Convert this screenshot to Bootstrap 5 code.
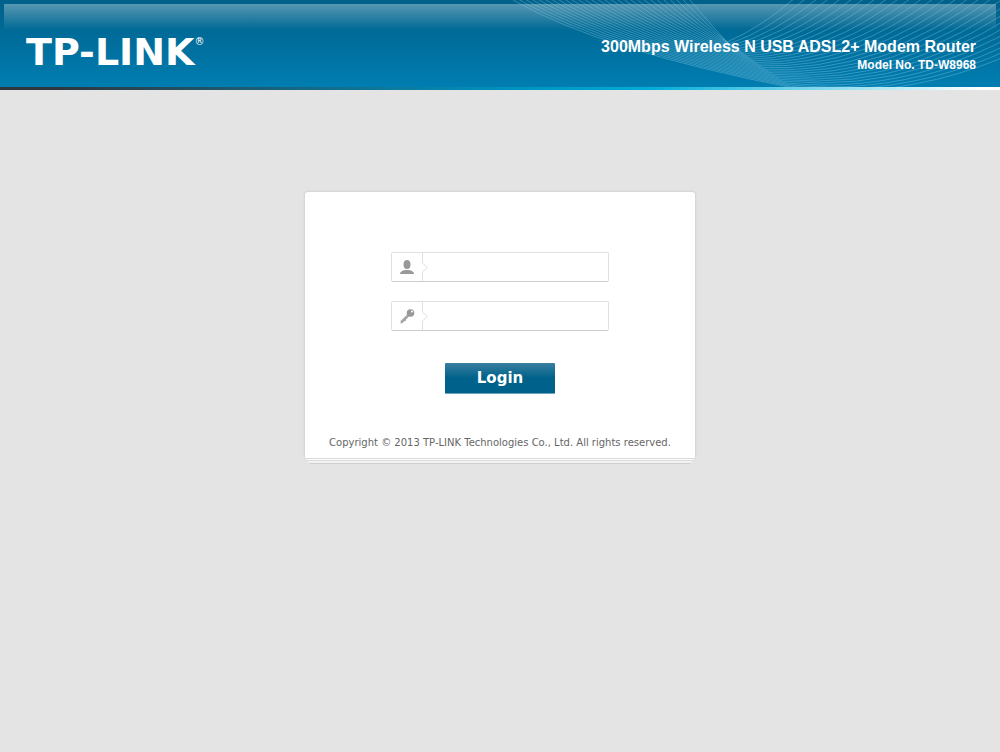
<!DOCTYPE html>
<html lang="en">
<head>
<meta charset="utf-8">
<meta name="viewport" content="width=device-width, initial-scale=1">
<title>TD-W8968</title>
<link href="https://cdn.jsdelivr.net/npm/bootstrap@5.3.0/dist/css/bootstrap.min.css" rel="stylesheet">
<style>
body{background:#e4e4e4;font-family:"DejaVu Sans",Verdana,sans-serif}
.top-bar{height:90px;background:linear-gradient(#00618a 0,#006a96 30px,#007db1 87px);color:#fff}
.top-bar::before{content:"";position:absolute;inset:4px 4px auto;height:26px;background:linear-gradient(rgba(255,255,255,.34),rgba(255,255,255,0))}
.top-bar::after{content:"";position:absolute;inset:auto 0 0;height:3px;background:linear-gradient(90deg,#30343c 0,#30343c 5%,#0090bc 50%,#00add8 65%,#66cfe9 78%,#fff 98%)}
.waves{position:absolute;right:0;top:0}
.top-row{padding:32px 24px 0 26px}
.brand{font-size:38px;line-height:40px;font-weight:700;color:#fff}
.brand sup{font-size:10px;font-weight:400;top:-20px}
.product{font-family:"Liberation Sans",Arial,sans-serif;font-weight:700;padding-top:5px}
.product h1{font-size:16px;line-height:20px;font-weight:700}
.product p{font-size:12px;line-height:17px}
.login-main{padding-top:102px}
.login-panel{width:390px}
.login-box{background:#fff;border-radius:3px 3px 0 0;padding:60px 0 8px;box-shadow:0 0 3px rgba(0,0,0,.16)}
.sheet-stack{position:relative;height:6px;background:linear-gradient(#dadada 0 1px,#fcfcfc 1px 2px,#dcdcdc 2px 3px,#f2f2f2 3px 5px,#cfcfcf 5px 6px);clip-path:polygon(0 0,100% 0,calc(100% - 5px) 100%,5px 100%)}
.entries{gap:19px}
.entry{width:218px;height:30px;border:1px solid #e0e0e0;border-bottom-color:#ccc;border-radius:2px}
.entry .form-control{font-size:13px;border:0;padding:0 8px;background:none;box-shadow:none}
.login-btn{width:110px;height:31px;margin-top:32px;border:0;border-radius:1px;border-bottom:1px solid #6ba2bb;background:linear-gradient(#397f9f,#00618a 50%,#00618a);color:#fff;font-size:15px;line-height:28px;font-weight:700;padding:0}
.login-btn:hover{background:#00618a;color:#fff}
.legal{font-size:10px;line-height:14px;color:#666;margin-top:42px}
</style>
</head>
<body>
<header class="top-bar position-relative overflow-hidden">
  <svg class="waves" id="waves" width="500" height="88" viewBox="500 0 500 88" fill="none" stroke="#8fd0e6" stroke-opacity=".36" stroke-width="1" aria-hidden="true"></svg>
  <div class="top-row position-relative d-flex justify-content-between">
    <a class="brand text-decoration-none text-nowrap" href="#">TP-LINK<sup>®</sup></a>
    <div class="product text-end text-nowrap">
      <h1 class="m-0">300Mbps Wireless N USB ADSL2+ Modem Router</h1>
      <p class="m-0">Model No. TD-W8968</p>
    </div>
  </div>
</header>
<main class="login-main">
  <div class="login-panel mx-auto">
  <form class="login-box d-flex flex-column align-items-center">
    <div class="entries d-flex flex-column">
      <div class="entry d-flex">
        <label for="user" class="d-flex">
          <svg width="36" height="28" viewBox="0 0 36 28"><ellipse cx="15" cy="11.500" rx="3.500" ry="4.500" fill="#999"/><path d="M8 21c0-2.500 3-4 7-4s7 1.500 7 4z" fill="#999"/><path d="M30.500 0v10l5 4.500-5 4.500v9" fill="none" stroke="#e0e0e0"/></svg>
        </label>
        <input id="user" class="form-control" type="text" aria-label="Username" autocomplete="username">
      </div>
      <div class="entry d-flex">
        <label for="pass" class="d-flex">
          <svg width="36" height="28" viewBox="0 0 36 28"><path d="M16 13.500l-7 7" stroke="#aaa" stroke-width="2.500"/><path d="M9 21.500l7-7M12 17.500l2 1" stroke="#999" fill="none"/><circle cx="18.500" cy="11" r="3.800" fill="#999"/><circle cx="20" cy="9.500" r="1" fill="#fff"/><path d="M30.500 0v10l5 4.500-5 4.500v9" fill="none" stroke="#e0e0e0"/></svg>
        </label>
        <input id="pass" class="form-control" type="password" aria-label="Password" autocomplete="current-password">
      </div>
    </div>
    <button class="btn login-btn" type="submit">Login</button>
    <p class="legal mb-0 text-nowrap">Copyright © 2013 TP-LINK Technologies Co., Ltd. All rights reserved.</p>
  </form>
  <div class="sheet-stack"></div>
  </div>
</main>
<script src="https://cdn.jsdelivr.net/npm/bootstrap@5.3.0/dist/js/bootstrap.bundle.min.js"></script>
<script>
// Family of curves that dips from the top edge and fans out to the right
const waves = document.getElementById('waves');
const count = 27;
for (let i = 0; i <= count; i++) {
  const t = i / count, mix = (a, b) => a + (b - a) * t;
  const path = document.createElementNS('http://www.w3.org/2000/svg', 'path');
  path.setAttribute('d',
    `M${mix(513, 690)} 0Q${mix(600, 710)} ${mix(50, 24)} ${mix(793, 727)} ${mix(88, 42)}` +
    `Q${mix(960, 760)} ${mix(108, 28)} ${mix(1120, 795)} ${mix(-10, -2)}`);
  waves.append(path);
}
</script>
</body>
</html>
